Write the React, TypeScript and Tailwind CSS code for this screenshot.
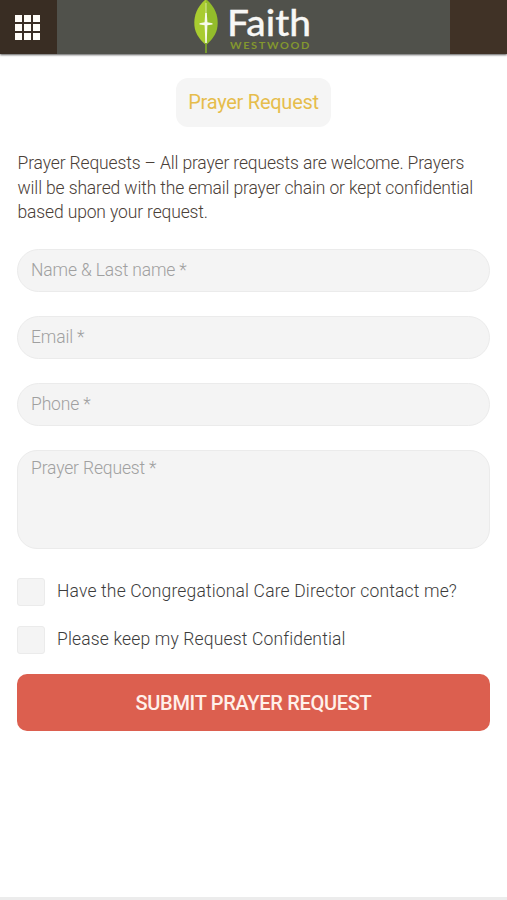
const fieldClass =
  "block w-full border border-[#ebebeb] bg-[#f4f4f4] px-[13px] text-[17.5px] font-light tracking-[-0.15px] text-[#333] outline-none placeholder:text-[#a0a0a0] placeholder:opacity-100";

function Logo() {
  return (
    <svg className="h-[54px] w-[130px]" viewBox="0 0 130 54" role="img" aria-label="Faith Westwood">
      <path d="M14 -1C5 7 2.3 15 2.3 23C2.3 32 6 38 14 45Z" fill="#a9cc30" />
      <path d="M14 -1C23 7 25.7 15 25.7 23C25.7 32 22 38 14 45Z" fill="#93bc2b" />
      <path d="M14 3V44" stroke="#d9e8a0" strokeWidth="1" />
      <path d="M13.2 13H14.8L15.4 22.3L20.5 23.2V24.4L15.4 25.2L14.7 43H13.4L12.6 25.2L7.5 24.4V23.2L12.6 22.3Z" fill="#f8faea" />
      <path d="M14 43V53" stroke="#7ca32b" strokeWidth="1.8" />
      <text x="35" y="35.5" textLength="84" lengthAdjust="spacingAndGlyphs" fontFamily="Lato, sans-serif" fontSize="36" fontWeight="500" fill="#f7f7f5" stroke="#f7f7f5" strokeWidth="0.3">Faith</text>
      <text x="38" y="49" textLength="81" lengthAdjust="spacingAndGlyphs" fontFamily="Lato, sans-serif" fontSize="9.5" fontWeight="700" letterSpacing="1.4" fill="#83972f">WESTWOOD</text>
    </svg>
  );
}

function CheckRow({ label }: { label: string }) {
  return (
    <label className="flex h-7 items-center gap-3 text-[17.5px] font-light text-[#3c3c3c]">
      <input type="checkbox" className="size-7 shrink-0 appearance-none rounded-[3px] border border-[#ebebeb] bg-[#f4f4f4]" />
      <span className="whitespace-nowrap tracking-[0.16px]">{label}</span>
    </label>
  );
}

export default function App() {
  return (
    <div className="flex h-[900px] w-[507px] flex-col overflow-hidden bg-white font-[Roboto,sans-serif]">
      <header className="flex h-[54px] shrink-0 bg-[#403226] shadow-[0_1px_2px_rgba(0,0,0,0.65)]">
        <button aria-label="Menu" className="flex w-[57px] items-center bg-[#392d23] pl-[15px]">
          <span className="grid grid-cols-3 gap-[2px]">
            {Array.from({ length: 9 }, (_, i) => (
              <span key={i} className="size-[7px] bg-[#fffdf9]" />
            ))}
          </span>
        </button>
        <div className="flex w-[393px] bg-[#50514b] pl-[135px]">
          <Logo />
        </div>
      </header>
      <main className="flex flex-1 flex-col px-[17px] pt-6">
        <h1 className="flex h-[49px] w-[155px] items-center justify-center self-center rounded-[12px] bg-[#f5f5f5] pb-[2px] text-[20px] font-normal tracking-[-0.25px] text-[#e6bd4c]">
          Prayer Request
        </h1>
        <p className="mt-6 ml-[0.5px] whitespace-nowrap text-[17.5px] leading-[24.5px] font-light tracking-[-0.14px] text-[#4a4038]">
          Prayer Requests – All prayer requests are welcome. Prayers<br />
          will be shared with the email prayer chain or kept confidential<br />
          based upon your request.
        </p>
        <form className="mt-6 flex flex-col">
          <div className="flex flex-col gap-6">
            <input className={`${fieldClass} h-[43px] rounded-full`} placeholder="Name & Last name *" />
            <input className={`${fieldClass} h-[43px] rounded-full`} placeholder="Email *" />
            <input className={`${fieldClass} h-[43px] rounded-full`} placeholder="Phone *" />
            <textarea className={`${fieldClass} h-[99px] resize-none rounded-[20px] pt-[4px]`} placeholder="Prayer Request *" />
          </div>
          <div className="mt-[29px] flex flex-col gap-5">
            <CheckRow label="Have the Congregational Care Director contact me?" />
            <CheckRow label="Please keep my Request Confidential" />
          </div>
          <button type="button" className="mt-5 h-[57px] rounded-[10px] bg-[#dc5f4f] pt-px text-[20px] font-medium tracking-[-0.3px] text-[#fff0ea]">
            SUBMIT PRAYER REQUEST
          </button>
        </form>
      </main>
      <footer className="h-[3px] shrink-0 bg-[#ececec]" />
    </div>
  );
}
